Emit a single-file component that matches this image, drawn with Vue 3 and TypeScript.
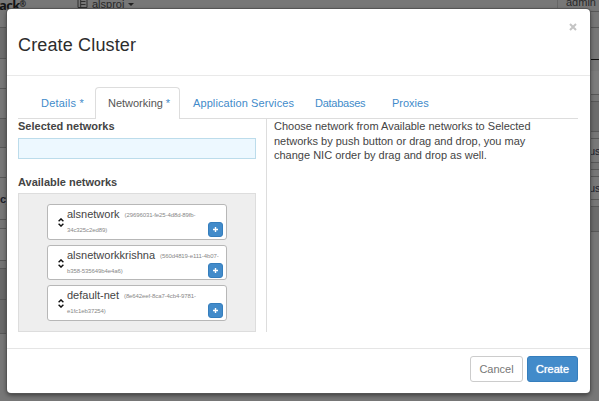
<script setup lang="ts">
import { ref } from 'vue'

interface Row { h: number; bg: string; label?: string; line?: string }
interface Network { name: string; id: string; rest: string }

const leftRows: Row[] = [
  { h: 28, bg: '#777' },
  { h: 31, bg: '#6d6d6d' },
  { h: 30, bg: '#777' },
  { h: 30, bg: '#777' },
  { h: 29, bg: '#6e6e6e' },
  { h: 30, bg: '#777' },
  { h: 42, bg: '#777', label: 'cy' },
  { h: 9, bg: '#747474' },
  { h: 32, bg: '#7a7a7a' },
  { h: 8, bg: '#747474' },
  { h: 31, bg: '#686868' },
  { h: 34, bg: '#696969' },
  { h: 67, bg: '#777', line: '#777' },
]
const rightRows: Row[] = [
  { h: 12, bg: '#777' },
  { h: 16, bg: '#777' },
  { h: 32, bg: '#777', line: '#111' },
  { h: 11, bg: '#777', line: '#777' },
  { h: 24, bg: '#7c7c7c' },
  { h: 7, bg: '#777' },
  { h: 30, bg: '#6c6c6c' },
  { h: 7, bg: '#777' },
  { h: 24, bg: '#797979', label: 'us' },
  { h: 7, bg: '#747474' },
  { h: 7, bg: '#777' },
  { h: 23, bg: '#797979', label: 'us' },
  { h: 7, bg: '#777' },
  { h: 25, bg: '#6c6c6c' },
  { h: 169, bg: '#777', line: '#777' },
]

const tabs = [
  { key: 'details', label: 'Details', required: true },
  { key: 'networking', label: 'Networking', required: true },
  { key: 'services', label: 'Application Services', required: false },
  { key: 'databases', label: 'Databases', required: false },
  { key: 'proxies', label: 'Proxies', required: false },
]
const active = ref('networking')

const networks: Network[] = [
  { name: 'alsnetwork', id: '(29696031-fe25-4d8d-89fb-', rest: '34c325c2ed89)' },
  { name: 'alsnetworkkrishna', id: '(560d4819-e111-4b07-', rest: 'b358-535649b4e4a6)' },
  { name: 'default-net', id: '(8e642eef-8ca7-4cb4-9781-', rest: 'e1fc1eb37254)' },
]
</script>

<template>
  <div class="screen">
    <div class="page">
      <div class="strip left">
        <div v-for="(r, i) in leftRows" :key="i" class="row" :style="{ height: r.h + 'px', background: r.bg, borderColor: r.line }">{{ r.label }}</div>
      </div>
      <header class="topbar">
        <b class="brand">ack<sup>®</sup></b>
        <span class="project">
          <svg width="11" height="10" viewBox="0 0 11 10"><path d="M1 0V7.5H10V0M3.7 0V7.5M3.7 1.5H8.5M3.7 4.5H8.5" fill="none" stroke="#303030" /></svg>
          <span class="pname">alsproj</span>
          <i class="caret"></i>
        </span>
        <span class="user">admin <i class="mark"></i></span>
      </header>
      <div class="strip right">
        <div v-for="(r, i) in rightRows" :key="i" class="row" :style="{ height: r.h + 'px', background: r.bg, borderColor: r.line }">{{ r.label }}</div>
      </div>
    </div>

    <section class="modal" role="dialog">
      <header class="head">
        <h3>Create Cluster</h3>
        <button class="close" aria-label="Close"><svg width="8" height="8" viewBox="0 0 8 8"><path d="M1 1L7 7M7 1L1 7" stroke="#c4c4c4" stroke-width="2" /></svg></button>
      </header>
      <div class="body">
        <nav class="tabs">
          <a v-for="t in tabs" :key="t.key" :class="['tab', t.key, { active: active === t.key }]" @click="active = t.key">{{ t.label }}<span v-if="t.required" class="star"> *</span></a>
        </nav>
        <div class="cols">
          <div class="pick">
            <h4 class="selected">Selected networks</h4>
            <div class="drop"></div>
            <h4 class="available">Available networks</h4>
            <ul class="pool">
              <li v-for="n in networks" :key="n.name" class="net">
                <svg class="sort" width="6" height="9" viewBox="0 0 6 9"><path d="M.6 3.2L3 .9L5.4 3.2M.6 5.8L3 8.1L5.4 5.8" fill="none" stroke="#111" stroke-width="1.4" /></svg>
                <div class="info">
                  <div class="line"><span class="name">{{ n.name }}</span><span class="id">{{ n.id }}</span></div>
                  <div class="id rest">{{ n.rest }}</div>
                </div>
                <button class="plus" aria-label="Add"><svg width="5" height="5" viewBox="0 0 5 5"><path d="M2.5 0V5M0 2.5H5" stroke="#fff" stroke-width="1.4" /></svg></button>
              </li>
            </ul>
          </div>
          <p class="help">
            <span class="h1">Choose network from Available networks to Selected</span>
            <span class="h2">networks by push button or drag and drop, you may</span>
            <span class="h3">change NIC order by drag and drop as well.</span>
          </p>
        </div>
      </div>
      <footer class="foot">
        <button class="btn cancel">Cancel</button>
        <button class="btn create">Create</button>
      </footer>
    </section>
  </div>
</template>

<style>
body { margin: 0; overflow: hidden; }
</style>

<style scoped>
* { box-sizing: border-box; }
.screen { position: relative; width: 599px; height: 401px; overflow: hidden; background: #777; font-family: "Liberation Sans", Arial, sans-serif; font-size: 11px; color: #444; }
button { font-family: inherit; padding: 0; margin: 0; }
.page { display: flex; height: 401px; }
.strip { width: 12px; overflow: hidden; flex: none; }
.right { width: 14px; }
.row { border-bottom: 1px solid #585858; font-size: 11px; overflow: hidden; white-space: nowrap; color: #1c202b; display: flex; align-items: center; }
.left .row { font-weight: bold; letter-spacing: -.5px; }
.right .row { border-right: 0; padding-left: 4px; }
.topbar { flex: 1; display: flex; height: 9px; position: relative; color: #292929; }
.brand { margin-left: -13px; width: 78px; font: bold 13px/12px "Open Sans", sans-serif; letter-spacing: -.7px; color: #141414; padding-top: 0; margin-top: -1px; }
.brand sup { font-size: 8px; line-height: 0; vertical-align: 3px; }
.project { display: flex; align-items: flex-start; height: 9px; overflow: hidden; }
.pname { margin: -3px 0 0 4px; width: 32px; font-size: 11px; line-height: 14px; }
.caret { border: 3px solid transparent; border-top-color: #222; margin: 3px 0 0 4px; }
.user { margin-left: auto; width: 30px; border-left: 1px solid #666; font-size: 11px; line-height: 12px; margin-top: -4px; white-space: nowrap; width: 28px; padding-left: 8px; }
.mark { display: inline-block; width: 3px; height: 2px; background: #111; }
.modal { position: absolute; left: 7px; top: 9px; width: 583px; height: 384px; background: #fff; border-radius: 4px; box-shadow: 0 0 0 1px #555, 0 2px 5px rgba(0,0,0,.55); display: flex; flex-direction: column; }
.head { height: 67px; border-bottom: 1px solid #e9e9e9; display: flex; justify-content: space-between; padding: 0 12px 0 11px; }
h3 { margin: 24px 0 0; font-size: 18px; line-height: 24px; font-weight: normal; letter-spacing: .15px; color: #2c2c2c; }
.close { border: 0; background: none; display: block; height: 8px; width: 10px; margin-top: 14px; line-height: 0; }
.body { height: 272px; padding: 11px 12px 0 11px; }
.tabs { display: flex; height: 32px; border-bottom: 1px solid #ddd; }
.tab { height: 32px; line-height: 31px; color: #428bca; white-space: nowrap; cursor: pointer; border: 1px solid transparent; border-bottom: 0; font-size: 11px; }
.star { color: #428bca; }
.details { width: 77px; padding-left: 22px; letter-spacing: .22px; }
.networking { width: 85px; padding-left: 12px; letter-spacing: -.02px; }
.services { width: 122px; padding-left: 12px; letter-spacing: .1px; }
.databases { width: 77px; padding-left: 12px; letter-spacing: -.25px; }
.proxies { padding-left: 12px; }
.tab.active { color: #555; background: #fff; border-color: #ddd; border-radius: 4px 4px 0 0; }
.cols { display: flex; height: 213px; }
.pick { width: 249px; border-right: 1px solid #ddd; padding-right: 10px; }
h4 { margin: 0; font: bold 11px/14px "Liberation Sans", sans-serif; color: #444; }
.selected { height: 19px; }
.drop { height: 21px; background: #edf8ff; border: 1px solid #bcdceb; }
.available { margin-top: 16px; height: 18px; }
.pool { margin: 0; height: 139px; padding: 10px 28px; border: 1px solid #ddd; background: #eee; list-style: none; display: flex; flex-direction: column; gap: 5px; }
.net { height: 36px; background: #fff; border: 1px solid #b7b7b7; border-radius: 3px; display: flex; padding-left: 10px; }
.sort { margin-top: 13px; flex: none; }
.info { flex: 1; margin-left: 3px; width: 0; white-space: nowrap; }
.line { display: flex; height: 20px; line-height: 18px; }
.name { font-size: 11px; letter-spacing: 0; }
.id { font-size: 6px; letter-spacing: -.1px; color: #888; margin-left: 5px; line-height: 21px; }
.rest { margin-left: 0; line-height: 10px; }
.plus { width: 15px; height: 15px; margin: 17px 3px 0 0; border: 1px solid #357ebd; border-radius: 3px; background: #428bca; display: flex; align-items: center; justify-content: center; }
.help { margin: 0; padding-left: 7px; flex: 1; font-size: 11px; line-height: 14.5px; white-space: nowrap; }
.help span { display: block; }
.foot { flex: 1; border-top: 1px solid #e5e5e5; display: flex; justify-content: flex-end; padding: 7px 12px 0 0; gap: 4px; }
.btn { height: 26px; border-radius: 3px; font-size: 11px; letter-spacing: 0; }
.cancel { width: 53px; color: #777; border: 1px solid #ccc; background: #fff; }
.create { width: 51px; color: #fff; border: 1px solid #357ebd; background: #428bca; text-shadow: 0 0 1px #fff; }
</style>
